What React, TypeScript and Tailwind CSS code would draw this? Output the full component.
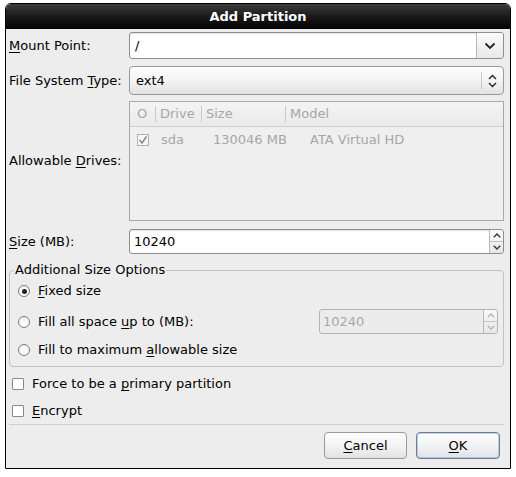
import React from 'react';

const font = { fontFamily: '"DejaVu Sans", "Liberation Sans", sans-serif' };

function ChevronDown({ className = '' }: { className?: string }) {
  return (
    <svg width="12" height="8" viewBox="0 0 12 8" className={className}>
      <path d="M1.5 1.5 L6 6 L10.5 1.5" fill="none" stroke="currentColor" strokeWidth="1.8" />
    </svg>
  );
}

function UpDown() {
  return (
    <svg width="9" height="14" viewBox="0 0 9 14">
      <path d="M1 5 L4.5 1.5 L8 5" fill="none" stroke="#222" strokeWidth="1.4" />
      <path d="M1 9 L4.5 12.5 L8 9" fill="none" stroke="#222" strokeWidth="1.4" />
    </svg>
  );
}

function Spin({ disabled = false }: { disabled?: boolean }) {
  const c = disabled ? '#b4b4b4' : '#333';
  return (
    <div className="flex flex-col w-[14px] h-full border-l border-[#b8b8b8] bg-gradient-to-b from-[#fafafa] to-[#e6e6e6] rounded-r-[3px]">
      <div className="flex-1 flex items-center justify-center border-b border-[#c4c4c4]">
        <svg width="8" height="5" viewBox="0 0 8 5">
          <path d="M0.8 4.2 L4 1 L7.2 4.2" fill="none" stroke={c} strokeWidth="1.3" />
        </svg>
      </div>
      <div className="flex-1 flex items-center justify-center">
        <svg width="8" height="5" viewBox="0 0 8 5">
          <path d="M0.8 0.8 L4 4 L7.2 0.8" fill="none" stroke={c} strokeWidth="1.3" />
        </svg>
      </div>
    </div>
  );
}

function Radio({ checked }: { checked?: boolean }) {
  return (
    <span className="w-[12px] h-[12px] rounded-full border border-[#7a7a7a] bg-gradient-to-b from-[#f2f2f2] to-white flex items-center justify-center">
      {checked && <span className="w-[5px] h-[5px] rounded-full bg-[#222]" />}
    </span>
  );
}

function Check() {
  return <span className="w-[12px] h-[12px] border border-[#8a8a8a] bg-white rounded-[1px]" />;
}

export default function App() {
  return (
    <div className="w-[516px] h-[477px] bg-white pt-[3px] pl-[5px]" style={font}>
      <div className="w-[506px] h-[466px] border border-black rounded-t-[6px] bg-[#ededed] flex flex-col text-[13px] text-black overflow-hidden">
        {/* title bar */}
        <div className="h-[25px] shrink-0 bg-gradient-to-b from-[#3c3c3c] via-[#1a1a1a] to-[#050505] flex items-center justify-center text-white font-bold text-[13px] rounded-t-[5px]">
          Add Partition
        </div>

        <div className="flex flex-col pl-[3px] pr-[6px]">
          {/* mount point */}
          <div className="flex items-center mt-[3px] h-[27px]">
            <div className="w-[120px]"><u className="underline-offset-2">M</u>ount Point:</div>
            <div className="flex-1 h-full flex border border-[#8e8e8e] rounded-[3px] bg-white shadow-[inset_0_1px_1px_rgba(0,0,0,0.12)]">
              <div className="flex-1 flex items-center pl-[5px]">/</div>
              <div className="w-[27px] flex items-center justify-center border-l border-[#b8b8b8] bg-gradient-to-b from-[#fbfbfb] to-[#e8e8e8] rounded-r-[3px] text-[#222]">
                <ChevronDown />
              </div>
            </div>
          </div>

          {/* fs type */}
          <div className="flex items-center mt-[7px] h-[29px]">
            <div className="w-[120px]">File System <u className="underline-offset-2">T</u>ype:</div>
            <div className="flex-1 h-full flex border border-[#9a9a9a] rounded-[4px] bg-gradient-to-b from-[#fdfdfd] via-[#f4f4f4] to-[#e2e2e2]">
              <div className="flex-1 flex items-center pl-[6px]">ext4</div>
              <div className="w-px my-[5px] bg-[#c8c8c8]" />
              <div className="w-[21px] flex items-center justify-center">
                <UpDown />
              </div>
            </div>
          </div>

          {/* drives */}
          <div className="flex items-center mt-[6px] h-[120px]">
            <div className="w-[120px]">Allowable <u className="underline-offset-2">D</u>rives:</div>
            <div className="flex-1 h-full border border-[#a8a8a8] bg-[#efefef] flex flex-col text-[#a6a6a6]">
              <div className="h-[25px] flex items-center border-b border-[#cfcfcf] bg-gradient-to-b from-[#f4f4f4] to-[#eaeaea]">
                <div className="w-[25px] pl-[7px] flex items-center">O</div>
                <div className="w-px h-[16px] bg-[#cacaca]" />
                <div className="w-[45px] pl-[4px]">Drive</div>
                <div className="w-px h-[16px] bg-[#cacaca]" />
                <div className="w-[83px] pl-[4px]">Size</div>
                <div className="w-px h-[16px] bg-[#cacaca]" />
                <div className="pl-[4px]">Model</div>
              </div>
              <div className="h-[26px] flex items-center">
                <div className="w-[31px] pl-[7px] flex items-center">
                  <span className="w-[12px] h-[12px] border border-[#b0b0b0] bg-[#f6f6f6] flex items-center justify-center">
                    <svg width="10" height="10" viewBox="0 0 10 10">
                      <path d="M1.5 5 L4 8 L8.5 1.5" fill="none" stroke="#8a8a8a" strokeWidth="1.5" />
                    </svg>
                  </span>
                </div>
                <div className="w-[52px]">sda</div>
                <div className="w-[97px]">130046 MB</div>
                <div>ATA Virtual HD</div>
              </div>
            </div>
          </div>

          {/* size */}
          <div className="flex items-center mt-[8px] h-[25px]">
            <div className="w-[120px]"><u className="underline-offset-2">S</u>ize (MB):</div>
            <div className="flex-1 h-full flex border border-[#8e8e8e] rounded-[3px] bg-white shadow-[inset_0_1px_1px_rgba(0,0,0,0.12)]">
              <div className="flex-1 flex items-center pl-[4px]">10240</div>
              <Spin />
            </div>
          </div>

          {/* frame */}
          <div className="relative mt-[16px] h-[97px] border border-[#c2c2c2] rounded-[4px] flex flex-col pl-[8px]">
            <div className="absolute -top-[10px] left-[4px] bg-[#ededed] px-[1px] leading-[18px]">Additional Size Options</div>
            <div className="flex items-center gap-[8px] mt-[11px] h-[18px]">
              <Radio checked />
              <span><u className="underline-offset-2">F</u>ixed size</span>
            </div>
            <div className="flex items-center gap-[8px] mt-[9px] h-[25px]">
              <Radio />
              <span>Fill all space <u className="underline-offset-2">u</u>p to (MB):</span>
              <div className="ml-auto mr-[5px] w-[179px] h-full flex border border-[#b4b4b4] rounded-[3px] bg-[#ececec] text-[#a8a8a8]">
                <div className="flex-1 flex items-center pl-[3px]">10240</div>
                <Spin disabled />
              </div>
            </div>
            <div className="flex items-center gap-[8px] mt-[7px] h-[18px]">
              <Radio />
              <span>Fill to maximum <u className="underline-offset-2">a</u>llowable size</span>
            </div>
          </div>

          {/* checkboxes */}
          <div className="flex items-center gap-[8px] mt-[8px] h-[18px] pl-[3px]">
            <Check />
            <span>Force to be a <u className="underline-offset-2">p</u>rimary partition</span>
          </div>
          <div className="flex items-center gap-[8px] mt-[9px] h-[18px] pl-[3px]">
            <Check />
            <span><u className="underline-offset-2">E</u>ncrypt</span>
          </div>

          <div className="mt-[4px] h-px bg-[#cdcdcd]" />

          {/* buttons */}
          <div className="flex justify-end gap-[9px] mt-[7px] pr-[4px]">
            <button className="w-[83px] h-[27px] border border-[#9a9a9a] rounded-[4px] bg-gradient-to-b from-[#fdfdfd] via-[#f4f4f4] to-[#e2e2e2]">
              <u className="underline-offset-2">C</u>ancel
            </button>
            <button className="w-[84px] h-[27px] border border-[#6c7f98] rounded-[4px] bg-gradient-to-b from-[#fdfdfd] via-[#f2f3f5] to-[#dfe2e7] shadow-[inset_0_0_0_1px_rgba(140,165,200,0.5)]">
              <u className="underline-offset-2">O</u>K
            </button>
          </div>
        </div>
      </div>
    </div>
  );
}
